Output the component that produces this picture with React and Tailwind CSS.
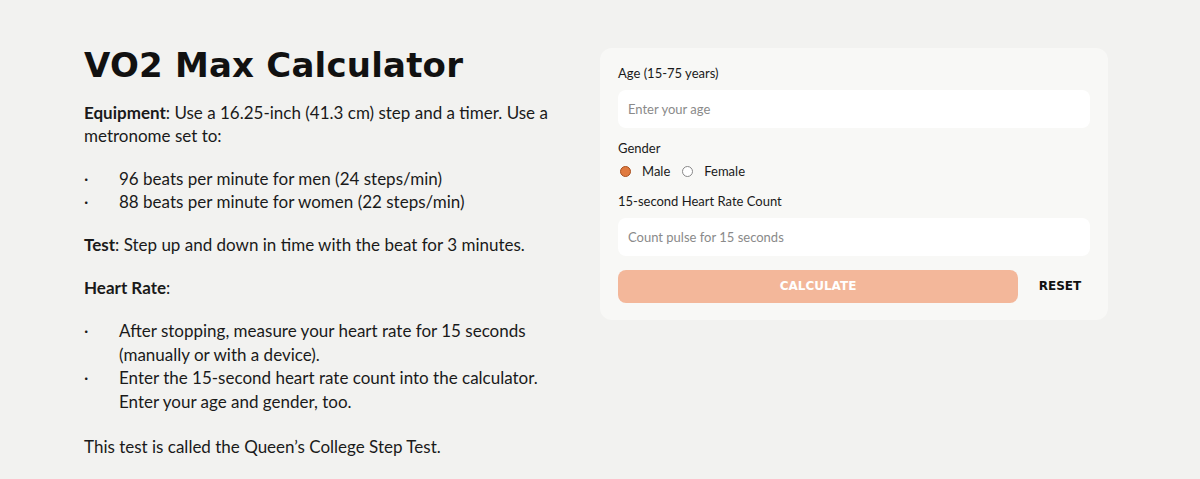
import React, { useState } from 'react';

const Bullet = ({ children }) => (
  <li className="flex">
    <span className="w-[35px] shrink-0">·</span>
    <span>{children}</span>
  </li>
);

const VO2Calculator = () => {
  const [age, setAge] = useState('');
  const [gender, setGender] = useState('male');
  const [pulse, setPulse] = useState('');

  return (
    <div className="min-h-[479px] bg-[#f2f2f0] font-['Lato',sans-serif] text-[#1a1a1a]">
      <div className="flex gap-[40px] pl-[84px] pt-[42px]">
        {/* Intro text */}
        <div className="w-[476px] text-[17px] leading-[23px]">
          <h1 className="mb-[16px] mt-[3px] font-['DejaVu_Sans',sans-serif] text-[34px] font-bold leading-[40px] tracking-[0.2px] text-[#111]">
            VO2 Max Calculator
          </h1>
          <p>
            <span className="font-bold">Equipment</span>: Use a 16.25-inch (41.3 cm) step and a timer. Use a metronome set to:
          </p>
          <ul className="mt-[20px]">
            <Bullet>96 beats per minute for men (24 steps/min)</Bullet>
            <Bullet>88 beats per minute for women (22 steps/min)</Bullet>
          </ul>
          <p className="mt-[20px]">
            <span className="font-bold">Test</span>: Step up and down in time with the beat for 3 minutes.
          </p>
          <p className="mt-[20px]">
            <span className="font-bold">Heart Rate</span>:
          </p>
          <ul className="mt-[20px] leading-[23.7px]">
            <Bullet>After stopping, measure your heart rate for 15 seconds (manually or with a device).</Bullet>
            <Bullet>Enter the 15-second heart rate count into the calculator. Enter your age and gender, too.</Bullet>
          </ul>
          <p className="mt-[21px]">This test is called the Queen’s College Step Test.</p>
        </div>

        {/* Calculator card */}
        <div className="mt-[6px] h-[272px] w-[508px] rounded-[12px] bg-[#f8f8f6] px-[18px] pt-[16px] text-[13px]">
          <label className="block leading-[18px]">Age (15-75 years)</label>
          <input
            value={age}
            onChange={(e) => setAge(e.target.value)}
            placeholder="Enter your age"
            className="mt-[8px] h-[38px] w-full rounded-[8px] bg-white px-[10px] text-[13px] outline-none placeholder:text-[#8a8a8a]"
          />
          <div className="mt-[11px] leading-[18px]">Gender</div>
          <div className="mt-[5px] flex items-center gap-[12px] pl-[2px]">
            {['male', 'female'].map((g) => (
              <label key={g} className="flex cursor-pointer items-center gap-[11px]" onClick={() => setGender(g)}>
                <span
                  className={`h-[11px] w-[11px] rounded-full border ${
                    gender === g ? 'border-[#a8501f] bg-[#e07a3f]' : 'border-[#888] bg-white'
                  }`}
                />
                <span>{g === 'male' ? 'Male' : 'Female'}</span>
              </label>
            ))}
          </div>
          <div className="mt-[10px] leading-[18px]">15-second Heart Rate Count</div>
          <input
            value={pulse}
            onChange={(e) => setPulse(e.target.value)}
            placeholder="Count pulse for 15 seconds"
            className="mt-[8px] h-[38px] w-full rounded-[8px] bg-white px-[10px] text-[13px] outline-none placeholder:text-[#8a8a8a]"
          />
          <div className="mt-[14px] flex items-center">
            <button className="h-[33px] w-[400px] rounded-[8px] bg-[#f3b79a] font-['DejaVu_Sans',sans-serif] text-[12px] font-bold text-white">
              CALCULATE
            </button>
            <button
              className="flex-1 pl-[12px] font-['DejaVu_Sans',sans-serif] text-[12px] font-bold text-[#111]"
              onClick={() => { setAge(''); setPulse(''); setGender('male'); }}
            >
              RESET
            </button>
          </div>
        </div>
      </div>
    </div>
  );
};

export default VO2Calculator;
